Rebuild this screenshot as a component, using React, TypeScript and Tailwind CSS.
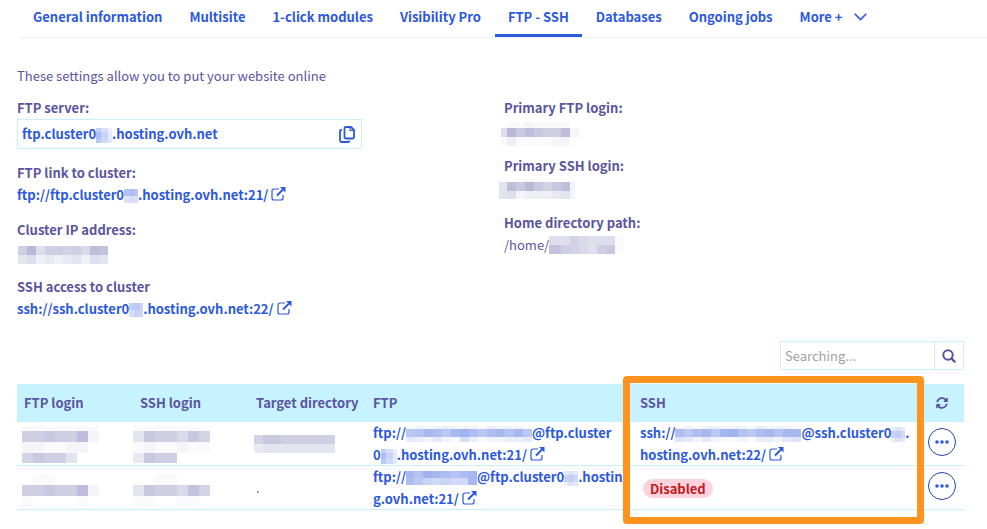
import React from "react";
import { FaSyncAlt } from "react-icons/fa";

type MosaicProps = {
  cols: number[];
  rows: [number, string][];
  tone?: string;
  className?: string;
};

const sum = (list: number[]) => list.reduce((total, n) => total + n, 0);
const repeat = (n: number, size: number): number[] => Array(n).fill(size);

// Each row is [height, shades]; a shade is a hex digit, 0 (clear) to f (strong).
function Mosaic({ cols, rows, tone = "#55509c", className = "block" }: MosaicProps) {
  const width = sum(cols);
  const height = sum(rows.map((r) => r[0]));
  return (
    <svg
      aria-label="hidden value"
      role="img"
      width={width}
      height={height}
      viewBox={`0 0 ${width} ${height}`}
      shapeRendering="crispEdges"
      className={className}
    >
      {rows.map(([h, shades], r) =>
        cols.map((w, c) => (
          <rect
            key={`${r}-${c}`}
            x={sum(cols.slice(0, c))}
            y={sum(rows.slice(0, r).map((row) => row[0]))}
            width={w}
            height={h}
            fill={tone}
            fillOpacity={parseInt(shades[c] ?? "0", 16) / 32}
          />
        )),
      )}
    </svg>
  );
}

function InlineMosaic(props: MosaicProps) {
  return <Mosaic {...props} tone="#2850dc" className="inline-block align-middle" />;
}

function ClusterDigits({ small = false }: { small?: boolean }) {
  return (
    <InlineMosaic
      cols={small ? [4, 6, 4] : [5, 7, 4]}
      rows={small ? [[4, "454"], [7, "897"], [4, "354"]] : [[4, "963"], [6, "c84"], [5, "a74"]]}
    />
  );
}

function ExternalIcon() {
  return (
    <svg width="15" height="14" viewBox="0 0 15 14" fill="none" stroke="currentColor" className="ml-[3px] inline-block align-[-1px]" aria-hidden="true">
      <path d="M8 2H3a2 2 0 0 0-2 2v7a2 2 0 0 0 2 2h7a2 2 0 0 0 2-2V8" strokeWidth="1.2" />
      <path d="M6 8.500 12 2.500" strokeWidth="1.9" />
      <path d="M9 0h5.500v5.500Z" fill="currentColor" stroke="none" />
    </svg>
  );
}

function CopyIcon() {
  return (
    <svg width="16" height="17" viewBox="0 0 16 17" fill="none" stroke="currentColor" strokeWidth="1.8" strokeLinejoin="round" aria-hidden="true">
      <path d="M7 1h5l3 3v7a1.500 1.500 0 0 1-1.500 1.500H7A1.500 1.500 0 0 1 5.500 11V2.500A1.500 1.500 0 0 1 7 1Z" />
      <path d="M11 1v3.500h4" strokeWidth="1.2" />
      <path d="M3 3.800h-.700A1.300 1.300 0 0 0 1 5.100V14.500A1.500 1.500 0 0 0 2.500 16H9a1.500 1.500 0 0 0 1.500-1.200" />
    </svg>
  );
}

function SearchIcon() {
  return (
    <svg width="14" height="14" viewBox="0 0 14 14" fill="none" stroke="currentColor" strokeLinecap="round" aria-hidden="true">
      <circle cx="6" cy="6" r="4.700" strokeWidth="2" />
      <path d="m9.600 9.600 3 3" strokeWidth="2.400" />
    </svg>
  );
}

function RowMenu() {
  return (
    <button type="button" aria-label="Actions" className="flex size-7 items-center justify-center rounded-full border border-[#2145b5] text-[#2b58e0]">
      <svg width="14" height="4" viewBox="0 0 14 4" fill="currentColor" aria-hidden="true">
        <circle cx="2" cy="2" r="1.800" />
        <circle cx="7" cy="2" r="1.800" />
        <circle cx="12" cy="2" r="1.800" />
      </svg>
    </button>
  );
}

const tabs = ["General information", "Multisite", "1-click modules", "Visibility Pro", "FTP - SSH", "Databases", "Ongoing jobs"];

const loginCols = repeat(7, 11);

export default function App() {
  return (
    <div className="min-h-screen bg-white pb-5 font-['Noto_Sans_CJK_SC',sans-serif] text-[13px] leading-[22px] text-[#5a559e]">
      <nav className="ml-[19px] flex h-[38px] gap-px border-b border-[#e6f4fd] pl-px font-bold text-[#2b58e0]">
        {tabs.map((tab) => (
          <a
            key={tab}
            href="#"
            aria-current={tab === "FTP - SSH" ? "page" : undefined}
            className={`h-[37px] whitespace-nowrap px-[13px] pt-[6px] ${tab === "FTP - SSH" ? "border-b-[3px] border-[#2b58e0]" : ""}`}
          >
            {tab}
          </a>
        ))}
        <button type="button" className="flex h-[34px] items-center gap-3 whitespace-nowrap px-[13px]">
          More +
          <svg width="13" height="8" viewBox="0 0 13 8" fill="none" stroke="currentColor" strokeWidth="1.6" aria-hidden="true">
            <path d="m.700.800 5.800 5.800L12.300.800" />
          </svg>
        </button>
      </nav>

      <main className="pl-[17px]">
        <p className="pt-[27px]">These settings allow you to put your website online</p>

        <div className="mt-[10px] grid grid-cols-2 gap-x-1">
          <dl className="flex flex-col gap-[13px]">
            <div>
              <dt className="font-bold">FTP server:</dt>
              <dd className="flex h-[30px] w-[345px] items-center justify-between border border-[#c8effc] px-1 font-bold text-[#2b58e0]">
                <span>
                  ftp.cluster0
                  <ClusterDigits />
                  .hosting.ovh.net
                </span>
                <button type="button" aria-label="Copy" className="pr-[2px]">
                  <CopyIcon />
                </button>
              </dd>
            </div>
            <div>
              <dt className="font-bold">FTP link to cluster:</dt>
              <dd className="font-bold text-[#2b58e0]">
                <a href="#">
                  ftp://ftp.cluster0
                  <InlineMosaic cols={[5, 6, 3]} rows={[[7, "bca"], [7, "566"]]} />
                  .hosting.ovh.net:21/
                  <ExternalIcon />
                </a>
              </dd>
            </div>
            <div>
              <dt className="font-bold">Cluster IP address:</dt>
              <dd className="h-[22px] pl-px pt-[5px]">
                <Mosaic cols={repeat(10, 9)} rows={[[9, "9d699897cb"], [9, "5634345365"]]} />
              </dd>
            </div>
            <div>
              <dt className="font-bold">SSH access to cluster</dt>
              <dd className="font-bold text-[#2b58e0]">
                <a href="#">
                  ssh://ssh.cluster0
                  <InlineMosaic cols={[5, 6, 3]} rows={[[7, "9a8"], [7, "687"]]} />
                  .hosting.ovh.net:22/
                  <ExternalIcon />
                </a>
              </dd>
            </div>
          </dl>

          <dl className="flex flex-col gap-[13px]">
            <div>
              <dt className="font-bold">Primary FTP login:</dt>
              <dd className="-ml-[3px] h-[23px] pt-[3px]">
                <Mosaic cols={[6, ...repeat(7, 9), 9]} rows={[[6, "011211110"], [9, "6daca99c2"], [9, "131111220"]]} />
              </dd>
            </div>
            <div>
              <dt className="font-bold">Primary SSH login:</dt>
              <dd className="-ml-[5px] h-[22px] pt-[2px]">
                <Mosaic cols={[8, ...repeat(7, 9), 5]} rows={[[3, "001111000"], [9, "5cada8ac2"], [8, "562333452"]]} />
              </dd>
            </div>
            <div>
              <dt className="font-bold">Home directory path:</dt>
              <dd className="flex items-center">
                /home/
                <Mosaic cols={[12, ...repeat(6, 9), 8]} rows={[[9, "66876661"], [9, "b98769a1"]]} />
              </dd>
            </div>
          </dl>
        </div>

        <div className="mr-[23px] mt-[21px] flex justify-end">
          <form className="flex h-[29px] w-[184px] border border-[#c8effc]" onSubmit={(e) => e.preventDefault()}>
            <input
              type="search"
              aria-label="Searching"
              placeholder="Searching..."
              className="min-w-0 flex-1 px-1 outline-none placeholder:text-[#a0a0a0]"
            />
            <button type="submit" aria-label="Search" className="flex w-[29px] items-center justify-center border-l border-[#c8effc]">
              <SearchIcon />
            </button>
          </form>
        </div>

        <div className="relative mr-[23px] mt-[14px]">
          <table className="w-full table-fixed border-collapse text-left">
            <thead>
              <tr className="h-[38px] bg-[#c7f2ff]">
                <th className="w-[116px] px-[7px]">FTP login</th>
                <th className="w-[116px] px-[7px]">SSH login</th>
                <th className="w-[117px] whitespace-nowrap pl-[7px]">Target directory</th>
                <th className="w-[267px] px-[7px]">FTP</th>
                <th className="px-[7px]">SSH</th>
                <th className="w-[44px] pl-[16px]">
                  <button type="button" aria-label="Refresh" className="flex">
                    <FaSyncAlt size={12} />
                  </button>
                </th>
              </tr>
            </thead>
            <tbody>
              <tr className="h-11 shadow-[inset_0_-1px_0_#c8effc]">
                <td className="pl-[5px]">
                  <Mosaic cols={loginCols} rows={[[5, "1111111"], [11, "99a99c2"], [11, "2211220"], [10, "8a99500"]]} />
                </td>
                <td>
                  <Mosaic cols={loginCols} rows={[[5, "1111111"], [11, "5a997a8"], [11, "1211211"], [10, "4a99000"]]} />
                </td>
                <td className="pl-[5px]">
                  <Mosaic cols={repeat(9, 9)} rows={[[9, "8aa999999"], [9, "455555555"]]} />
                </td>
                <td className="whitespace-nowrap pl-[7px] font-bold text-[#2b58e0]">
                  <a href="#">
                    ftp://
                    <InlineMosaic cols={repeat(14, 9)} rows={[[3, "12123222132221"], [8, "abdcadecacdbda"], [5, "43242163122334"]]} />
                    @ftp.cluster
                    <br />0
                    <ClusterDigits />
                    .hosting.ovh.net:21/
                    <ExternalIcon />
                  </a>
                </td>
                <td className="whitespace-nowrap pl-[7px] font-bold text-[#2b58e0]">
                  <a href="#">
                    ssh://
                    <InlineMosaic cols={repeat(14, 9)} rows={[[3, "12123222132221"], [8, "cacdadebacdbdd"], [5, "54242112133245"]]} />
                    @ssh.cluster0
                    <ClusterDigits small />
                    .<br />
                    hosting.ovh.net:22/
                    <ExternalIcon />
                  </a>
                </td>
                <td className="pl-2 pt-[6px] align-top">
                  <RowMenu />
                </td>
              </tr>
              <tr className="h-11 shadow-[inset_0_-1px_0_#c8effc]">
                <td className="pl-[5px]">
                  <Mosaic cols={loginCols} rows={[[3, "0000000"], [11, "0110000"], [11, "99a99c2"], [10, "1000010"]]} />
                </td>
                <td>
                  <Mosaic cols={loginCols} rows={[[3, "0000000"], [11, "0011000"], [11, "5a997b8"], [10, "1100110"]]} />
                </td>
                <td className="pl-[7px]">.</td>
                <td className="whitespace-nowrap pl-[7px] font-bold text-[#2b58e0]">
                  <a href="#">
                    ftp://
                    <InlineMosaic cols={[8, ...repeat(7, 9)]} rows={[[7, "dbedcbcd"], [7, "ca87877d"]]} />
                    @ftp.cluster0
                    <ClusterDigits small />
                    .hostin
                    <br />
                    g.ovh.net:21/
                    <ExternalIcon />
                  </a>
                </td>
                <td className="pl-[10px]">
                  <span className="block h-[19px] w-fit rounded-full bg-[#fdd3dd] px-[7px] font-bold leading-[20px] text-[#c11b1b]">Disabled</span>
                </td>
                <td className="pl-2 pt-[6px] align-top">
                  <RowMenu />
                </td>
              </tr>
            </tbody>
          </table>
          <div className="pointer-events-none absolute -bottom-[14px] -top-2 right-10 w-[301px] rounded-[4px] border-[7px] border-[#ff931e]" />
        </div>
      </main>
    </div>
  );
}
